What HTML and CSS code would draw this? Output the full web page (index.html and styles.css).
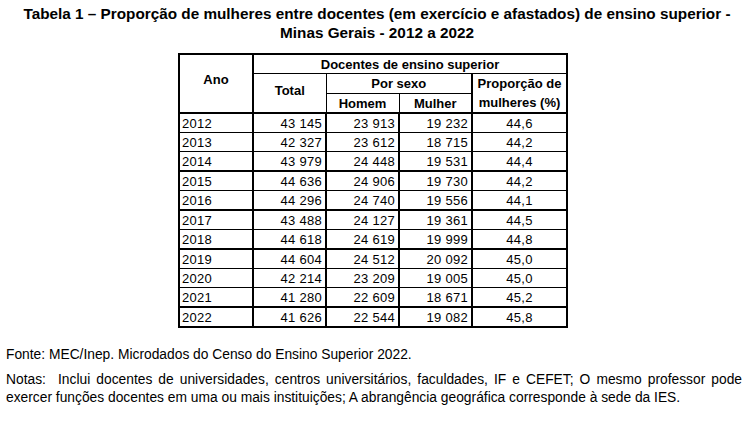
FILE: index.html
```html
<!DOCTYPE html>
<html lang="pt">
<head>
<meta charset="utf-8">
<link rel="stylesheet" href="styles.css">
</head>
<body>
<div class="page">
  <h1 class="title">Tabela 1 – Proporção de mulheres entre docentes (em exercício e afastados) de ensino superior -<br>Minas Gerais - 2012 a 2022</h1>
  <table class="data">
    <colgroup>
      <col class="c-ano"><col class="c-num"><col class="c-num"><col class="c-num"><col class="c-prop">
    </colgroup>
    <thead>
      <tr class="h1">
        <th rowspan="3" class="ano-h">Ano</th>
        <th colspan="4">Docentes de ensino superior</th>
      </tr>
      <tr class="h2">
        <th rowspan="2" class="total-h">Total</th>
        <th colspan="2">Por sexo</th>
        <th rowspan="2" class="prop-h">Proporção de<br>mulheres (%)</th>
      </tr>
      <tr class="h3">
        <th>Homem</th>
        <th>Mulher</th>
      </tr>
    </thead>
    <tbody>
      <tr><td>2012</td><td>43 145</td><td>23 913</td><td>19 232</td><td>44,6</td></tr>
      <tr><td>2013</td><td>42 327</td><td>23 612</td><td>18 715</td><td>44,2</td></tr>
      <tr class="thick"><td>2014</td><td>43 979</td><td>24 448</td><td>19 531</td><td>44,4</td></tr>
      <tr><td>2015</td><td>44 636</td><td>24 906</td><td>19 730</td><td>44,2</td></tr>
      <tr class="thick"><td>2016</td><td>44 296</td><td>24 740</td><td>19 556</td><td>44,1</td></tr>
      <tr><td>2017</td><td>43 488</td><td>24 127</td><td>19 361</td><td>44,5</td></tr>
      <tr class="thick"><td>2018</td><td>44 618</td><td>24 619</td><td>19 999</td><td>44,8</td></tr>
      <tr><td>2019</td><td>44 604</td><td>24 512</td><td>20 092</td><td>45,0</td></tr>
      <tr><td>2020</td><td>42 214</td><td>23 209</td><td>19 005</td><td>45,0</td></tr>
      <tr class="thick"><td>2021</td><td>41 280</td><td>22 609</td><td>18 671</td><td>45,2</td></tr>
      <tr><td>2022</td><td>41 626</td><td>22 544</td><td>19 082</td><td>45,8</td></tr>
    </tbody>
  </table>
  <p class="source">Fonte: MEC/Inep. Microdados do Censo do Ensino Superior 2022.</p>
  <p class="notes">Notas:&nbsp; Inclui docentes de universidades, centros universitários, faculdades, IF e CEFET; O mesmo professor pode exercer funções docentes em uma ou mais instituições; A abrangência geográfica corresponde à sede da IES.</p>
</div>
</body>
</html>
```

FILE: styles.css
```css
html, body {
  margin: 0;
  padding: 0;
  background: #fff;
  color: #000;
}
.page {
  width: 754px;
  font-family: "Liberation Sans", Arial, sans-serif;
}
.title {
  margin: 4px 0 0 0;
  font-size: 15.3px;
  font-weight: bold;
  line-height: 19px;
  text-align: center;
}
.data {
  margin: 11px 0 0 178px;
  border-collapse: collapse;
  table-layout: fixed;
  width: 388px;
  font-size: 13px;
  border: 2px solid #000;
}
.c-ano { width: 74px; }
.c-num { width: 73px; }
.c-prop { width: 95px; }
.data th {
  font-weight: bold;
  border: 1px solid #000;
  padding: 0;
  line-height: 15px;
  text-align: center;
}
.h1 th { height: 18px; }
.h2 th { height: 19px; }
.h3 th { height: 18px; }
.data .ano-h { border-right: 2px solid #000; padding-bottom: 8px; }
.data .total-h { padding-bottom: 5px; }
.data .prop-h { border-left: 2px solid #000; line-height: 19px; }
.data thead tr:last-child th, .data .ano-h, .data .total-h, .data .prop-h { border-bottom: 2px solid #000; }
.data td {
  border: 1px solid #000;
  border-left-width: 2px;
  border-right-width: 2px;
  padding: 0 3px;
  height: 18px;
  line-height: 15px;
  text-align: right;
  letter-spacing: 0.3px;
}
.data td:first-child { text-align: left; padding-left: 2px; }
.data td:last-child { text-align: center; }
.data tr.thick td { border-bottom-width: 2px; }
.source {
  margin: 18px 0 0 6px;
  font-size: 13.8px;
  line-height: 18px;
}
.notes {
  margin: 7px 0 0 6px;
  width: 736px;
  font-size: 13.8px;
  line-height: 18px;
  text-align: justify;
}
```
